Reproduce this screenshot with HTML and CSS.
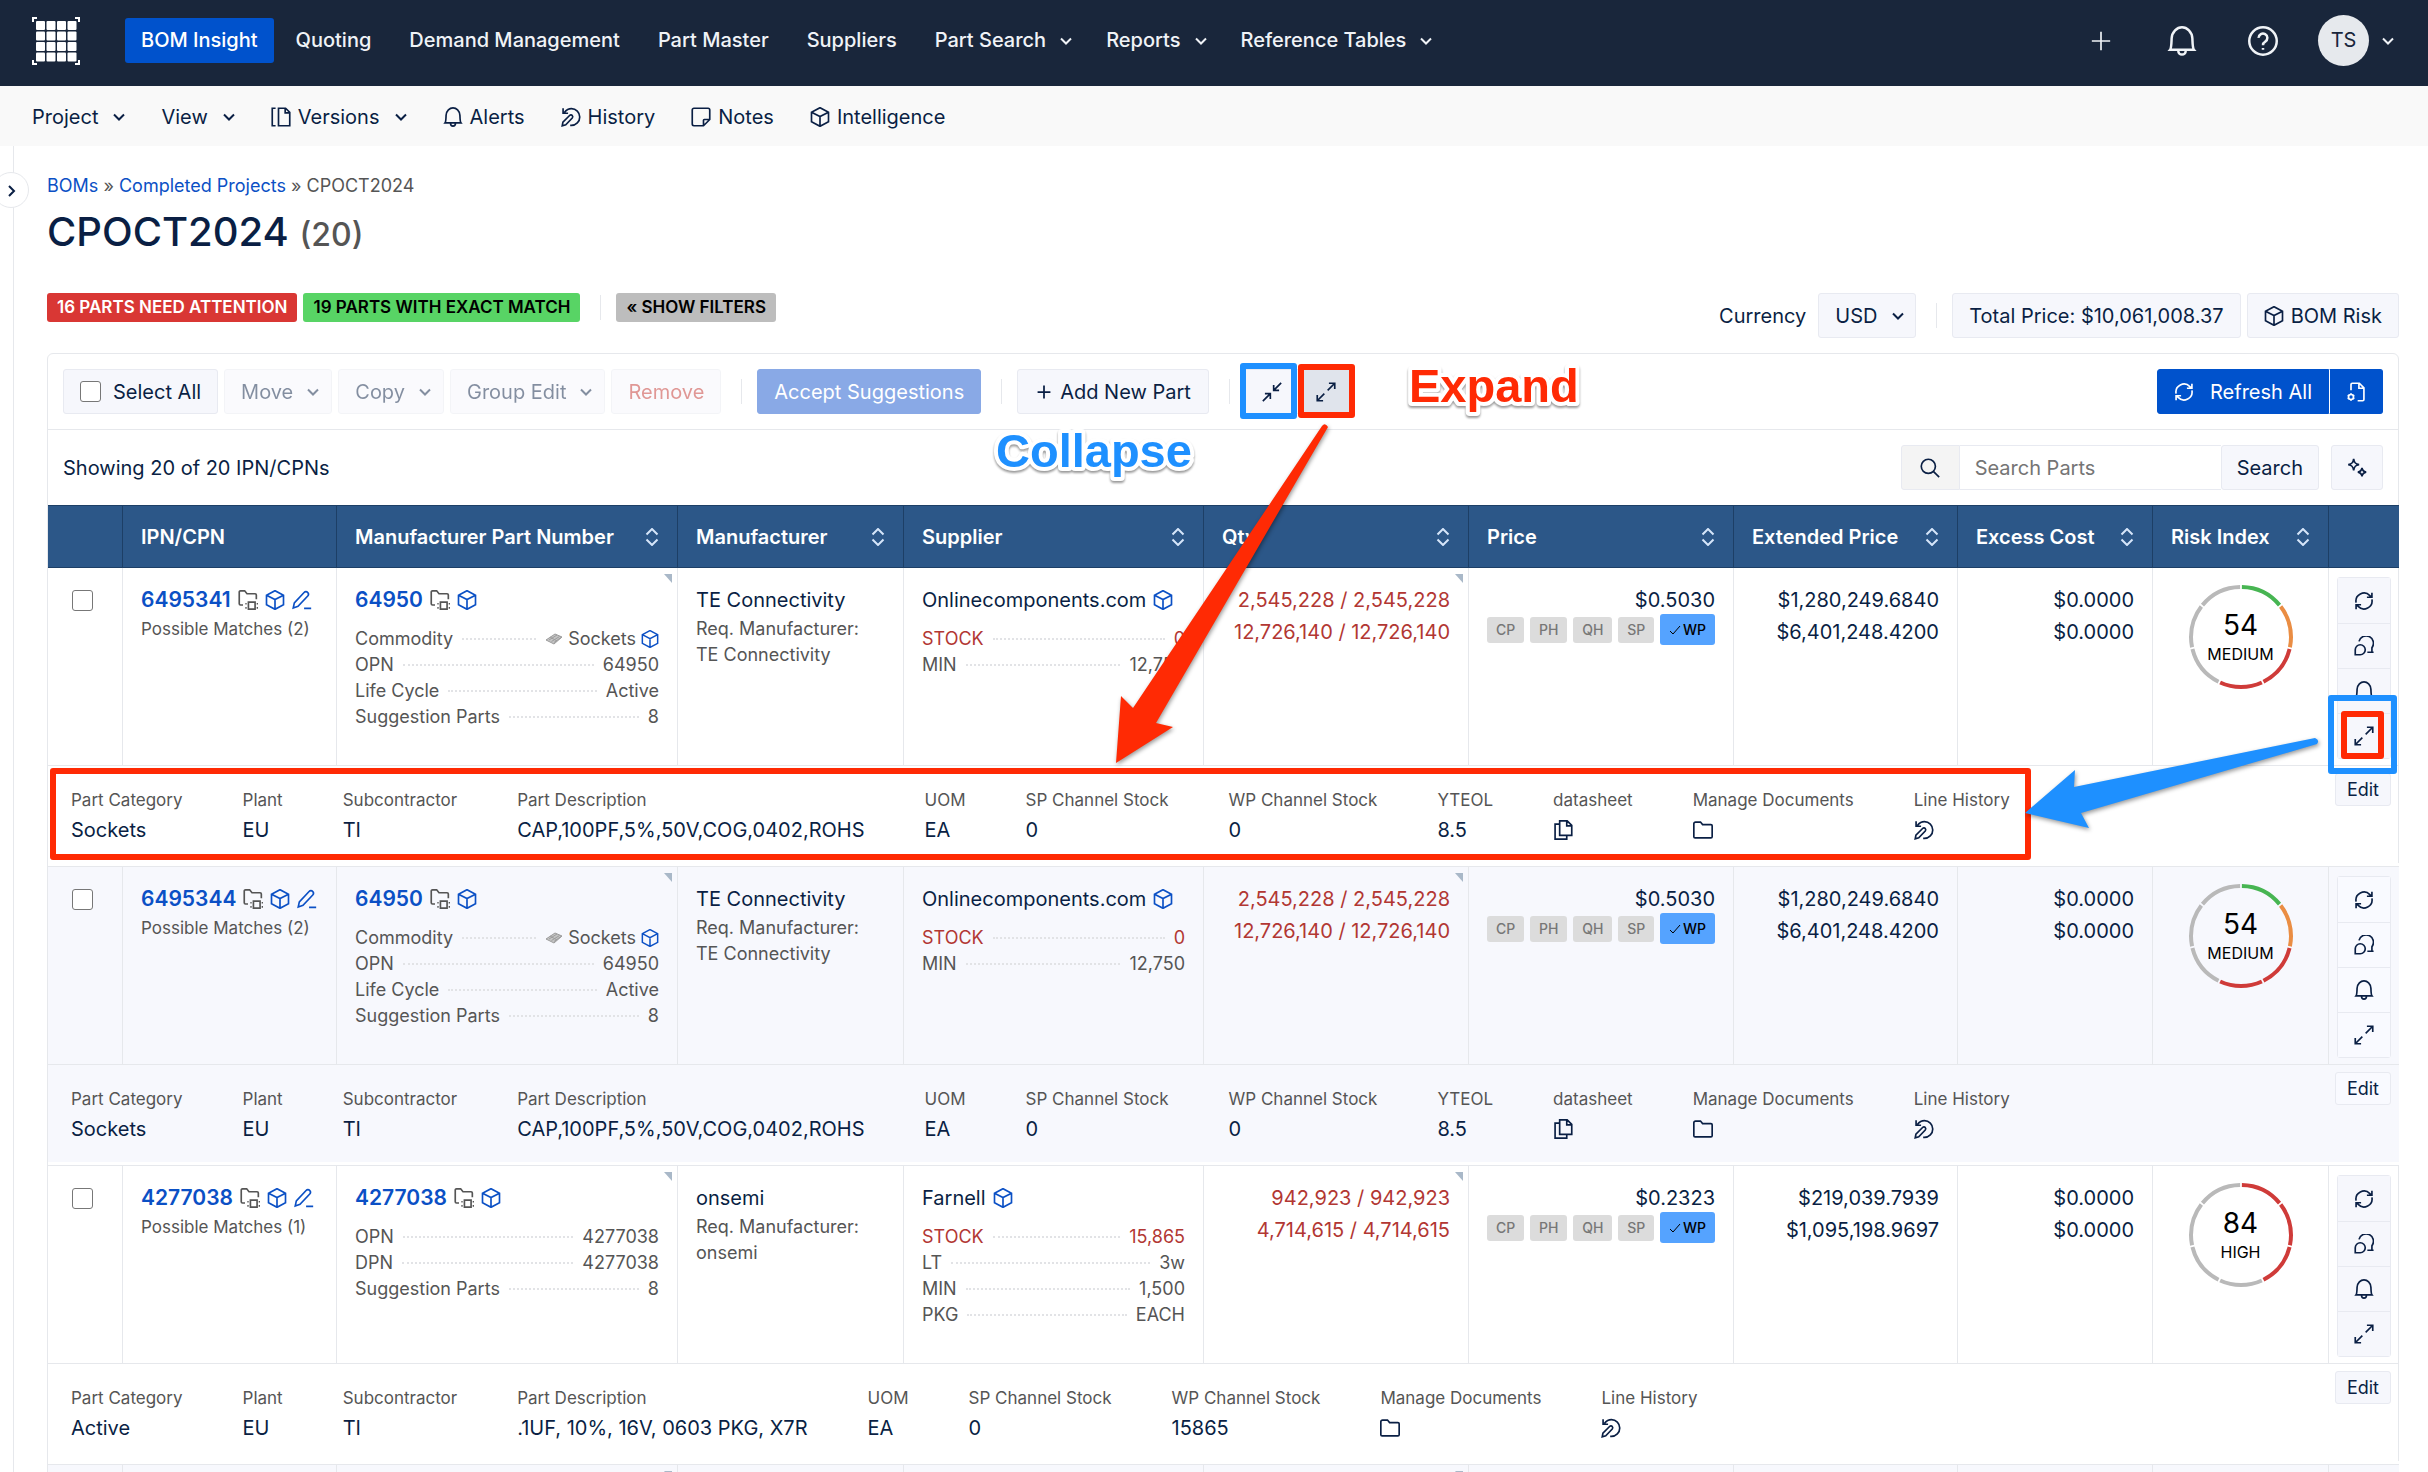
FILE: index.html
```html
<!DOCTYPE html>
<html lang="en">
<head>
    <meta charset="UTF-8">
    <meta name="viewport" content="width=device-width, initial-scale=1.0">
    <title>CPOCT2024 - BOM Insight</title>
    <link rel="stylesheet" href="styles.css">
</head>
<body>

<!-- icon set -->
<svg class="sprite" aria-hidden="true">
    <symbol id="i-down" viewBox="0 0 12 12"><path d="M1 3.5l5 5 5-5"/></symbol>
    <symbol id="i-right" viewBox="0 0 12 12"><path d="M4 1L9 6 4 11"/></symbol>
    <symbol id="i-plus" viewBox="0 0 24 24"><path d="M12 1v22M1 12h22"/></symbol>
    <symbol id="i-bell" viewBox="0 0 24 24"><path d="M2.500 19c1-1.200 1-4 1.200-9C4 4.500 8 1 12 1s8 3.500 8.300 9c.2 5 .2 7.800 1.200 9zM9 19.500c0 4.500 6 4.500 6 0"/></symbol>
    <symbol id="i-help" viewBox="0 0 24 24"><circle cx="12" cy="12" r="11"/><path d="M8.500 9.500a3.500 3.500 0 1 1 5.300 3c-1.300.8-1.800 1.300-1.800 2.800M12 17.600v1.400"/></symbol>
    <symbol id="i-versions" viewBox="0 0 24 24"><path d="M5.500 1.500H1.500v21h4M9 1.500h8.500L22.500 6.500v16H9zM17 1.500V7h5.500"/></symbol>
    <symbol id="i-history" viewBox="0 0 24 24"><path d="M4 6.500C6.500 3.500 9 2 12.500 2a10 10 0 0 1 0 20h-1.500M2.500 1.500v6h6M1.500 22.500l.8-4.300 8-8c1-1 2.400-1 3.200 0s.8 2 0 3l-7.800 8.200z"/></symbol>
    <symbol id="i-note" viewBox="0 0 24 24"><path d="M15 22.500H3.500a2 2 0 0 1-2-2v-17a2 2 0 0 1 2-2h17a2 2 0 0 1 2 2V15zM15 22.500V16a1 1 0 0 1 1-1h6.500"/></symbol>
    <symbol id="i-cube" viewBox="0 0 24 24"><path d="M12 .8l10.200 5.400v11.600L12 23.200 1.800 17.800V6.200zM1.800 6.200L12 11.500l10.200-5.300M12 11.500v11.700"/></symbol>
    <symbol id="i-folder" viewBox="0 0 24 24"><path d="M3 2.500H9L11.500 5.500H21.500A1.500 1.500 0 0 1 23 7v13a1.500 1.500 0 0 1-1.500 1.500h-19A1.500 1.500 0 0 1 1 20V4.500a2 2 0 0 1 2-2z"/></symbol>
    <symbol id="i-part" viewBox="0 0 24 24"><path d="M6 18H3a1.500 1.500 0 0 1-1.500-1.500v-14A1.500 1.500 0 0 1 3 1h5l2.800 3.500H20.500A1.500 1.500 0 0 1 22 6v5M12.500 14.500h8v8.500h-8zM8.800 16.500h1.600M8.800 21.500h1.600M22.400 16.500h1.600M22.400 21.500h1.600"/></symbol>
    <symbol id="i-pencil" viewBox="0 0 24 24"><path d="M1.500 21.500l1.300-6L14.500 3a3 3 0 0 1 4.400 0c1.100 1.200 1.100 2.900 0 4.200L7.200 19.600zM14.500 22h8.500"/></symbol>
    <symbol id="i-refresh" viewBox="0 0 24 24"><path d="M2.500 14A9.700 9.700 0 0 1 19 5.500l2 2M21.500 10A9.700 9.700 0 0 1 5 18.500l-2-2M15.500 7.500H21.500V2M8.500 16.500H2.500V22"/></symbol>
    <symbol id="i-comments" viewBox="0 0 24 24"><path d="M1.500 22.500v-6a6 6 0 1 1 6 6zM6 6.500A8.800 8.800 0 1 1 21.500 14v5.500H23.500M16 19.500h6"/></symbol>
    <symbol id="i-expand" viewBox="0 0 24 24"><path d="M14 10l8.500-8.500M15.500 1.500h7v7M10 14l-8.500 8.500M1.500 15.500v7h7"/></symbol>
    <symbol id="i-collapse" viewBox="0 0 24 24"><path d="M14 10l9-9M14 3.500V10h6.500M10 14l-9 9M3.500 14H10v6.500"/></symbol>
    <symbol id="i-docs" viewBox="0 0 24 24"><path d="M8 1h9l5.500 5.500v12H8zM16.500 1V7h6M8 5H2.500v18h14v-4.500"/></symbol>
    <symbol id="i-search" viewBox="0 0 24 24"><circle cx="10" cy="10" r="8.500"/><path d="M16 16l7 7"/></symbol>
    <symbol id="i-sparkle" viewBox="0 0 24 24"><path d="M8 1c.7 4.800 2.200 6.300 6.500 7-4.300.7-5.800 2.200-6.500 7-.7-4.800-2.200-6.300-6.500-7C5.800 7.300 7.300 5.800 8 1zM18 12c.5 3.200 1.600 4.400 5 5-3.400.6-4.500 1.800-5 5-.5-3.200-1.600-4.400-5-5 3.400-.6 4.500-1.800 5-5z"/></symbol>
    <symbol id="i-filecog" viewBox="0 0 24 24"><path d="M6 10V3a1.500 1.500 0 0 1 1.500-1.500H16L21.500 7v14a1.500 1.500 0 0 1-1.500 1.500h-6M15.500 1.500V7.500h6"/><circle cx="6" cy="18" r="3"/><path d="M6 13.500v1.500M6 21v1.500M2 15.800l1.500.8M8.500 19.400l1.500.8M2 20.200l1.500-.8M8.500 16.600l1.500-.8"/></symbol>
    <symbol id="i-check" viewBox="0 0 12 12"><path d="M1 7l3 3 7-8"/></symbol>
    <symbol id="i-sort" viewBox="0 0 14 18"><path d="M1.500 6.500L7 1l5.500 5.500M1.500 11.500L7 17l5.500-5.500"/></symbol>
    <symbol id="i-chip" viewBox="0 0 18 14"><path d="M1 8L10 2l7 3-8 7z" fill="#c4c4c4" stroke="#9c9c9c" stroke-width="1"/><path d="M4 8l8-5M6.500 9.500l8-5M9 10.500l7-5M5 5l7 4" stroke="#9c9c9c" stroke-width="1"/></symbol>
</svg>

<header class="topbar">
    <a href="#" class="logo" aria-label="Home">
        <svg viewBox="0 0 48 48"><path fill="none" stroke="#fff" stroke-width="2" d="M1 5V1h4M43 1h4v4M1 43v4h4M43 47h4v-4"/><g fill="#fff" id="logo-grid"></g></svg>
    </a>
    <nav class="main-nav">
        <a href="#" class="active">BOM Insight</a>
        <a href="#">Quoting</a>
        <a href="#">Demand Management</a>
        <a href="#">Part Master</a>
        <a href="#">Suppliers</a>
        <a href="#" class="has-menu">Part Search <svg class="chev"><use href="#i-down"/></svg></a>
        <a href="#" class="has-menu">Reports <svg class="chev"><use href="#i-down"/></svg></a>
        <a href="#" class="has-menu">Reference Tables <svg class="chev"><use href="#i-down"/></svg></a>
    </nav>
    <div class="top-actions">
        <button aria-label="Add"><svg class="ico-plus"><use href="#i-plus"/></svg></button>
        <button aria-label="Notifications"><svg class="ico-top"><use href="#i-bell"/></svg></button>
        <button aria-label="Help"><svg class="ico-top"><use href="#i-help"/></svg></button>
        <button class="user" aria-label="Account"><span class="avatar">TS</span><svg class="chev"><use href="#i-down"/></svg></button>
    </div>
</header>

<nav class="sub-nav">
    <a href="#">Project <svg class="chev"><use href="#i-down"/></svg></a>
    <a href="#">View <svg class="chev"><use href="#i-down"/></svg></a>
    <a href="#"><span><svg class="ico"><use href="#i-versions"/></svg>Versions</span> <svg class="chev"><use href="#i-down"/></svg></a>
    <a href="#"><span><svg class="ico"><use href="#i-bell"/></svg>Alerts</span></a>
    <a href="#"><span><svg class="ico"><use href="#i-history"/></svg>History</span></a>
    <a href="#"><span><svg class="ico"><use href="#i-note"/></svg>Notes</span></a>
    <a href="#"><span><svg class="ico"><use href="#i-cube"/></svg>Intelligence</span></a>
</nav>

<div class="page">
    <aside class="rail">
        <button class="rail-toggle" aria-label="Open sidebar"><svg class="chev"><use href="#i-right"/></svg></button>
    </aside>

    <main>
        <div class="breadcrumb"><a href="#">BOMs</a> » <a href="#">Completed Projects</a> » CPOCT2024</div>
        <h1>CPOCT2024 <small>(20)</small></h1>

        <div class="summary">
            <div class="badges">
                <button class="badge red">16 PARTS NEED ATTENTION</button>
                <button class="badge green">19 PARTS WITH EXACT MATCH</button>
                <i class="divider"></i>
                <button class="badge gray">« SHOW FILTERS</button>
            </div>
            <div class="totals">
                <label for="currency">Currency</label>
                <div class="select-wrap">
                    <select id="currency"><option>USD</option></select>
                    <svg class="chev"><use href="#i-down"/></svg>
                </div>
                <i class="divider"></i>
                <button class="btn">Total Price: $10,061,008.37</button>
                <button class="btn"><svg class="ico"><use href="#i-cube"/></svg>BOM Risk</button>
            </div>
        </div>

        <section class="card">
            <div class="toolbar">
                <label class="btn select-all"><input type="checkbox"> Select All</label>
                <button class="btn" disabled>Move <svg class="chev"><use href="#i-down"/></svg></button>
                <button class="btn" disabled>Copy <svg class="chev"><use href="#i-down"/></svg></button>
                <button class="btn" disabled>Group Edit <svg class="chev"><use href="#i-down"/></svg></button>
                <button class="btn remove" disabled>Remove</button>
                <i class="divider"></i>
                <button class="btn primary" disabled>Accept Suggestions</button>
                <i class="divider"></i>
                <button class="btn add"><svg class="ico-small"><use href="#i-plus"/></svg>Add New Part</button>
                <i class="divider"></i>
                <div class="btn-group">
                    <button class="btn" aria-label="Collapse all"><svg class="ico"><use href="#i-collapse"/></svg></button>
                    <button class="btn on" aria-label="Expand all"><svg class="ico"><use href="#i-expand"/></svg></button>
                </div>
                <div class="btn-group refresh">
                    <button class="btn primary"><svg class="ico"><use href="#i-refresh"/></svg>Refresh All</button>
                    <button class="btn primary" aria-label="Refresh settings"><svg class="ico"><use href="#i-filecog"/></svg></button>
                </div>
            </div>

            <div class="listbar">
                <span>Showing 20 of 20 IPN/CPNs</span>
                <form class="search">
                    <label for="search" aria-label="Search Parts"><svg class="ico"><use href="#i-search"/></svg></label>
                    <input type="text" id="search" placeholder="Search Parts">
                    <button type="button" class="btn">Search</button>
                    <button type="button" class="btn sparkle" aria-label="Smart search"><svg class="ico"><use href="#i-sparkle"/></svg></button>
                </form>
            </div>

            <table>
                <colgroup>
                    <col class="c-check"><col class="c-ipn"><col class="c-mpn"><col class="c-mfr"><col class="c-sup"><col class="c-qty">
                    <col class="c-price"><col class="c-ext"><col class="c-excess"><col class="c-risk"><col class="c-act">
                </colgroup>
                <thead><tr id="head"></tr></thead>
                <tbody id="rows"></tbody>
            </table>
        </section>
    </main>
</div>

<!-- guide marks for expand / collapse -->
<svg class="guide" viewBox="0 0 2428 1472" aria-hidden="true">
    <g fill="none" stroke-width="6" stroke-linejoin="round">
        <rect class="line-blue" x="1243" y="366" width="51" height="50"/>
        <rect class="line-red" x="1301" y="367" width="51" height="48"/>
        <rect class="line-red" x="53" y="771" width="1975" height="86"/>
        <rect class="line-blue" x="2331" y="698" width="63" height="73"/>
        <rect class="line-red" x="2344" y="714" width="37" height="42"/>
    </g>
    <path class="arrow-red" d="M1322 426q3-4 6 1L1156 723l17 4-57 36 5-67 12 12z"/>
    <path class="arrow-blue" d="M2315 738q5 2 2 6L2081 813l8 15-64-15 50-43-1 17z"/>
    <text class="mark-red" x="1409" y="402">Expand</text>
    <text class="mark-blue" x="996" y="467">Collapse</text>
</svg>

<script>
    const columns = ['', 'IPN/CPN', 'Manufacturer Part Number', 'Manufacturer', 'Supplier', 'Qty', 'Price', 'Extended Price', 'Excess Cost', 'Risk Index', ''];

    const parts = [
        {
            ipn: '6495341', matches: 2, mpn: '64950', mfr: 'TE Connectivity', supplier: 'Onlinecomponents.com',
            specs: [['Commodity', 'Sockets'], ['OPN', '64950'], ['Life Cycle', 'Active'], ['Suggestion Parts', '8']],
            stock: [['STOCK', '0'], ['MIN', '12,750']],
            qty: ['2,545,228 / 2,545,228', '12,726,140 / 12,726,140'], price: '$0.5030',
            ext: ['$1,280,249.6840', '$6,401,248.4200'], risk: 54, level: 'MEDIUM', ring: ['green', 'orange', 'red', 'red'],
            details: [['Part Category', 'Sockets'], ['Plant', 'EU'], ['Subcontractor', 'TI'], ['Part Description', 'CAP,100PF,5%,50V,COG,0402,ROHS'], ['UOM', 'EA'], ['SP Channel Stock', '0'], ['WP Channel Stock', '0'], ['YTEOL', '8.5'], ['datasheet', '#docs'], ['Manage Documents', '#folder'], ['Line History', '#history']]
        },
        {
            ipn: '4277038', matches: 1, mpn: '4277038', mfr: 'onsemi', supplier: 'Farnell',
            specs: [['OPN', '4277038'], ['DPN', '4277038'], ['Suggestion Parts', '8']],
            stock: [['STOCK', '15,865'], ['LT', '3w'], ['MIN', '1,500'], ['PKG', 'EACH']],
            qty: ['942,923 / 942,923', '4,714,615 / 4,714,615'], price: '$0.2323',
            ext: ['$219,039.7939', '$1,095,198.9697'], risk: 84, level: 'HIGH', ring: ['red', 'red', 'red'],
            details: [['Part Category', 'Active'], ['Plant', 'EU'], ['Subcontractor', 'TI'], ['Part Description', '.1UF, 10%, 16V, 0603 PKG, X7R'], ['UOM', 'EA'], ['SP Channel Stock', '0'], ['WP Channel Stock', '15865'], ['Manage Documents', '#folder'], ['Line History', '#history']]
        }
    ];
    parts.splice(1, 0, { ...parts[0], ipn: '6495344' });

    const ringColors = { green: '#47b552', orange: '#ea8d43', red: '#cf3b39', gray: '#b9b9b9' };

    function icon(name, cls = 'ico') {
        return `<svg class="${cls}"><use href="#i-${name}"/></svg>`;
    }

    function specList(list) {
        return '<dl>' + list.map(([name, value]) => {
            const extra = name === 'Commodity';
            return `<div class="${name === 'STOCK' ? 'alert' : ''}"><dt>${name}</dt><i></i><dd>${extra ? icon('chip', 'chip') : ''}${value}${extra ? icon('cube', 'ico-cube') : ''}</dd></div>`;
        }).join('') + '</dl>';
    }

    // seven segments, filled clockwise from the top
    function gauge(part) {
        let segments = '';
        for (let i = 0; i < 7; i++) {
            const color = ringColors[part.ring[i] || 'gray'];
            segments += `<circle cx="53" cy="53" r="50" pathLength="70" stroke="${color}" stroke-dasharray="9.6 60.4" stroke-dashoffset="${-(i * 10 + 0.2)}"/>`;
        }
        return `<div class="gauge"><svg viewBox="0 0 106 106">${segments}</svg><b>${part.risk}</b><span>${part.level}</span></div>`;
    }

    function partRow(p) {
        const tags = ['CP', 'PH', 'QH', 'SP'].map(t => `<button class="tag">${t}</button>`).join('');
        const cells = p.details.map(([name, value]) =>
            `<div><span>${name}</span>${value[0] === '#' ? `<a href="#" aria-label="${name}">${icon(value.slice(1))}</a>` : `<p>${value}</p>`}</div>`).join('');
        return `
        <tr class="part">
            <td class="check"><input type="checkbox" aria-label="Select ${p.ipn}"></td>
            <td><p class="name"><a href="#">${p.ipn}</a>${icon('part', 'ico gray')}${icon('cube', 'ico blue')}${icon('pencil', 'ico blue')}</p><p class="matches">Possible Matches (${p.matches})</p></td>
            <td class="corner"><p class="name"><a href="#">${p.mpn}</a>${icon('part', 'ico gray')}${icon('cube', 'ico blue')}</p>${specList(p.specs)}</td>
            <td><p>${p.mfr}</p><p class="req">Req. Manufacturer:<br>${p.mfr}</p></td>
            <td><p class="name">${p.supplier}${icon('cube', 'ico blue')}</p>${specList(p.stock)}</td>
            <td class="num alert corner"><p>${p.qty[0]}</p><p>${p.qty[1]}</p></td>
            <td class="num"><p>${p.price}</p><div class="tags">${tags}<button class="tag on">${icon('check', 'ico-check')}WP</button></div></td>
            <td class="num"><p>${p.ext[0]}</p><p>${p.ext[1]}</p></td>
            <td class="num"><p>$0.0000</p><p>$0.0000</p></td>
            <td>${gauge(p)}</td>
            <td class="actions"><div>${['refresh', 'comments', 'bell', 'expand'].map(n => `<button aria-label="${n}">${icon(n)}</button>`).join('')}</div></td>
        </tr>
        <tr class="detail"><td colspan="11"><div class="detail-grid">${cells}<button class="edit">Edit</button></div></td></tr>`;
    }

    document.getElementById('head').innerHTML = columns.map((c, i) =>
        `<th><div>${c}${i > 1 && c ? icon('sort', 'sort') : ''}</div></th>`).join('');

    const nextRow = '<tr class="part">' + columns.map((c, i) => `<td class="${i === 2 || i === 5 ? 'corner' : ''}"></td>`).join('') + '</tr>';
    document.getElementById('rows').innerHTML = parts.map(partRow).join('') + nextRow;

    let grid = '';
    for (let r = 0; r < 4; r++) {
        for (let c = 0; c < 4; c++) {
            grid += `<rect x="${4 + c * 10.5}" y="${4 + r * 10.5}" width="9" height="9" rx="1"/>`;
        }
    }
    document.getElementById('logo-grid').innerHTML = grid;
</script>

</body>
</html>
```
FILE: styles.css
```css
* {
    box-sizing: border-box;
}
body {
    margin: 0;
    height: 100vh;
    overflow: hidden;
    position: relative;
    display: flex;
    flex-direction: column;
    background: #fff;
    color: #0a1f44;
    font-family: Inter, "Liberation Sans", sans-serif;
    font-size: 20px;
    line-height: 32px;
}
a {
    color: #0b50c5;
    text-decoration: none;
}
p, dl, dd {
    margin: 0;
}
button, input, select {
    font: inherit;
    color: inherit;
}
button {
    cursor: pointer;
}
svg {
    fill: none;
    stroke: currentColor;
    stroke-width: 2;
    flex: none;
}
.sprite {
    display: none;
}
.ico {
    width: 20px;
    height: 20px;
}
.ico-small {
    width: 14px;
    height: 14px;
    stroke-width: 3;
}
.chev {
    width: 12px;
    height: 12px;
}
.blue {
    color: #0b50c5;
}
.gray {
    color: #555;
}

/* top bar */
.topbar {
    height: 86px;
    flex: none;
    display: flex;
    align-items: center;
    padding: 0 34px 5px 32px;
    background: #19263b;
    color: #f0f3f7;
}
.logo {
    width: 48px;
    height: 48px;
    margin-right: 45px;
}
.logo svg {
    width: 48px;
    height: 48px;
    stroke: none;
}
.main-nav {
    display: flex;
    gap: 6px;
    font-weight: 500;
}
.main-nav a {
    color: inherit;
    padding: 6px 16px;
    line-height: 33px;
    border-radius: 3px;
}
.main-nav .active {
    background: #0052cc;
    color: #fff;
}
.main-nav .has-menu {
    display: flex;
    align-items: center;
    gap: 14px;
    padding-right: 12px;
}
.top-actions {
    margin-left: auto;
    display: flex;
    align-items: center;
}
.top-actions button {
    width: 81px;
    padding: 0;
    border: 0;
    background: none;
    display: flex;
    align-items: center;
    justify-content: center;
}
.ico-plus {
    width: 20px;
    height: 20px;
}
.ico-top {
    width: 30px;
    height: 30px;
    stroke-width: 2;
}
.top-actions .user {
    width: auto;
    gap: 13px;
    margin-left: 15px;
}
.avatar {
    width: 51px;
    height: 51px;
    border-radius: 50%;
    background: #e6e9ed;
    color: #19263b;
    line-height: 51px;
}

/* sub navigation */
.sub-nav {
    height: 60px;
    flex: none;
    display: flex;
    align-items: center;
    gap: 36px;
    padding: 2px 32px 0;
    background: #f9f9f9;
}
.sub-nav a {
    display: flex;
    align-items: center;
    gap: 15px;
    color: inherit;
}
.sub-nav span {
    display: flex;
    align-items: center;
    gap: 7px;
}

/* page */
.page {
    display: flex;
    flex: 1;
    min-height: 0;
}
.rail {
    width: 14px;
    flex: none;
    border-right: 1px solid #e6e8ec;
    position: relative;
    z-index: 1;
}
.rail-toggle {
    position: absolute;
    top: 26px;
    left: -7px;
    width: 36px;
    height: 36px;
    padding: 0;
    border: 1px solid #e6e8ec;
    border-radius: 50%;
    background: #fff;
}
main {
    flex: 1;
    min-width: 0;
    overflow: hidden;
    padding: 27px 29px 0 33px;
}
.breadcrumb {
    font-size: 18px;
    line-height: 26px;
    color: #555;
}
h1 {
    margin: 4px 0 29px;
    font-size: 40px;
    line-height: 58px;
    font-weight: 500;
}
h1 small {
    font-size: 32px;
    color: #555;
}
.summary {
    display: flex;
    justify-content: space-between;
    align-items: flex-start;
    margin-bottom: 15px;
}
.badges, .totals {
    display: flex;
    align-items: center;
    gap: 6px;
}
.badge {
    border: 0;
    border-radius: 3px;
    padding: 0 10px;
    font-size: 17px;
    font-weight: 600;
    line-height: 29px;
}
.badge.red {
    background: #d93734;
    color: #fff;
}
.badge.green {
    background: #58d465;
    color: #000;
}
.badge.gray {
    background: #bdbdbd;
    color: #000;
}
.divider {
    width: 1px;
    height: 25px;
    margin: 0 9px 0 14px;
    background: #e6e8ec;
}
.btn {
    height: 45px;
    padding: 0 16px;
    border: 1px solid #e8eaf1;
    border-radius: 3px;
    background: #f6f7fc;
    display: flex;
    align-items: center;
    gap: 7px;
    white-space: nowrap;
}
.btn .chev {
    margin: 0 -4px 0 7px;
}
.btn:disabled {
    opacity: 0.5;
}
.btn.primary {
    background: #0052cc;
    border-color: #0052cc;
    color: #fff;
}
.btn.primary:disabled {
    background: #89a9e6;
    border-color: #89a9e6;
    opacity: 1;
}
.btn.remove {
    color: #c2322e;
}
.btn.add {
    padding: 0 17px 0 19px;
    gap: 9px;
}
.btn.on {
    background: #e0e4ec;
}
.totals label {
    margin-right: 6px;
}
.select-wrap {
    position: relative;
}
.select-wrap select {
    appearance: none;
    width: 98px;
    height: 45px;
    padding: 0 16px;
    border: 1px solid #e8eaf1;
    border-radius: 3px;
    background: #f6f7fc;
}
.select-wrap .chev {
    position: absolute;
    right: 12px;
    top: 17px;
    pointer-events: none;
}
input[type="checkbox"] {
    appearance: none;
    width: 21px;
    height: 21px;
    margin: 0;
    border: 1px solid #777;
    border-radius: 3px;
    background: #fff;
    display: block;
}

/* parts card */
.card {
    border: 1px solid #e6e8ec;
    border-radius: 6px 6px 0 0;
}
.toolbar {
    display: flex;
    align-items: center;
    gap: 6px;
    padding: 15px;
    border-bottom: 1px solid #e6e8ec;
}
.btn.select-all {
    gap: 12px;
}
.btn-group {
    display: flex;
}
.btn-group .btn {
    border-radius: 0;
    padding: 0 16px;
}
.refresh {
    margin-left: auto;
}
.refresh .btn {
    gap: 16px;
    border-radius: 3px 0 0 3px;
}
.refresh .btn + .btn {
    border-left-color: #fff;
    border-radius: 0 3px 3px 0;
}
.listbar {
    display: flex;
    justify-content: space-between;
    align-items: center;
    padding: 15px;
}
.search {
    display: flex;
}
.search label {
    width: 59px;
    height: 45px;
    border: 1px solid #e8eaf1;
    border-radius: 3px 0 0 3px;
    background: #f4f4f4;
    display: flex;
    align-items: center;
    justify-content: center;
}
.search input {
    width: 261px;
    height: 45px;
    padding: 0 15px;
    border: 1px solid #e8eaf1;
    border-width: 1px 0;
    outline: 0;
}
.search input::placeholder {
    color: #757575;
    opacity: 1;
}
.search .btn {
    padding: 0 15px;
}
.search .sparkle {
    margin-left: 12px;
}

/* table */
table {
    width: 100%;
    table-layout: fixed;
    border-collapse: separate;
    border-spacing: 0;
}
.c-check { width: 75px; }
.c-ipn { width: 214px; }
.c-mpn { width: 341px; }
.c-mfr { width: 226px; }
.c-sup { width: 300px; }
.c-qty { width: 265px; }
.c-price { width: 265px; }
.c-ext { width: 224px; }
.c-excess { width: 195px; }
.c-risk { width: 176px; }
.c-act { width: 70px; }
th {
    height: 63px;
    padding: 0 18px;
    background: #2c5788;
    color: #fff;
    font-weight: 600;
    text-align: left;
    border: 1px solid #1d3f66;
    border-left-width: 0;
}
th:last-child {
    border-right: 0;
}
th div {
    display: flex;
    justify-content: space-between;
    align-items: center;
    white-space: nowrap;
}
.sort {
    width: 14px;
    height: 18px;
    color: #d6e6fa;
}
td {
    padding: 16px 18px 0;
    vertical-align: top;
    border-right: 1px solid #e6e8ec;
    border-bottom: 1px solid #e6e8ec;
}
td:last-child {
    border-right: 0;
}
.part td {
    height: 198px;
}
.part:nth-child(4n+3), .detail:nth-child(4n) {
    background: #f7f8fd;
}
.part:nth-child(4n+3) .actions button, .detail:nth-child(4n) .edit {
    background: #f9faff;
}
.corner {
    position: relative;
}
.corner::after {
    content: "";
    position: absolute;
    top: 6px;
    right: 5px;
    border-top: 9px solid #a9b8c8;
    border-left: 8px solid transparent;
}
td.check {
    padding: 22px 24px 0;
}
.name {
    display: flex;
    align-items: center;
    gap: 7px;
    white-space: nowrap;
}
.name a {
    font-size: 21px;
    font-weight: 600;
}
.matches, .req, dl {
    font-size: 18px;
    line-height: 26px;
    color: #555;
}
.matches {
    font-size: 17px;
}
dl {
    margin-top: 10px;
}
dl div {
    display: flex;
    align-items: center;
    gap: 9px;
}
dl i {
    flex: 1;
    border-top: 2px dotted #e2e3e6;
}
dd {
    display: flex;
    align-items: center;
    gap: 5px;
}
.chip {
    width: 18px;
    height: 14px;
}
.ico-cube {
    width: 18px;
    height: 18px;
    color: #0b50c5;
}
.alert {
    color: #b23733;
}
.num {
    text-align: right;
    white-space: nowrap;
}
.tags {
    display: flex;
    justify-content: space-between;
    align-items: center;
    margin-top: -2px;
}
.tag {
    padding: 0 9px;
    border: 0;
    border-radius: 3px;
    background: #dcdcdc;
    color: #777;
    font-size: 14px;
    font-weight: 500;
    line-height: 26px;
}
.tag.on {
    display: flex;
    align-items: center;
    gap: 2px;
    background: #55a3ff;
    color: #000;
    line-height: 31px;
}
.ico-check {
    width: 12px;
    height: 12px;
    stroke-width: 1;
}
.gauge {
    position: relative;
    width: 106px;
    height: 106px;
    margin: 0 auto;
    display: flex;
    flex-direction: column;
    align-items: center;
    justify-content: center;
    color: #000;
    font-size: 16px;
    line-height: 24px;
}
.gauge svg {
    position: absolute;
    inset: 0;
    stroke-width: 4;
    transform: rotate(-90deg);
}
.gauge b {
    font-size: 28px;
    font-weight: 400;
    line-height: 34px;
}
td.actions {
    padding: 9px 8px 6px;
}
.actions div {
    border: 1px solid #e8eaf1;
    border-radius: 3px;
}
.actions button {
    display: flex;
    align-items: center;
    justify-content: center;
    width: 100%;
    height: 45px;
    padding: 0;
    border: 0;
    background: #f6f7fc;
}
.actions button + button {
    border-top: 1px solid #e8eaf1;
}
.detail td {
    height: 101px;
    padding: 7px 8px 0 23px;
    box-shadow: inset 0 -3px #fff;
}
.detail-grid {
    display: flex;
    gap: 60px;
    align-items: flex-start;
}
.detail-grid div {
    padding-top: 13px;
}
.detail-grid span {
    display: block;
    font-size: 17px;
    line-height: 28px;
    color: #555;
}
.detail-grid a {
    display: flex;
    align-items: center;
    height: 32px;
    color: inherit;
}
.edit {
    margin-left: auto;
    height: 33px;
    padding: 0 11px;
    border: 1px solid #e8eaf1;
    border-radius: 3px;
    background: #f6f7fc;
    font-size: 18px;
    line-height: 30px;
}

/* guide marks */
.guide {
    position: absolute;
    top: 0;
    left: 0;
    width: 2428px;
    height: 1472px;
    pointer-events: none;
    stroke: none;
}
.line-red {
    stroke: #ff2a04;
}
.line-blue {
    stroke: #1e90ff;
}
.arrow-red, .arrow-blue {
    filter: drop-shadow(1px 2px 2px rgba(0, 0, 0, 0.4));
}
.arrow-red, .mark-red {
    fill: #ff2a04;
}
.arrow-blue, .mark-blue {
    fill: #1e90ff;
}
.guide text {
    font-family: "Liberation Sans", Arial, sans-serif;
    font-size: 47px;
    font-weight: 700;
    stroke: #fff;
    stroke-width: 8;
    stroke-linejoin: round;
    paint-order: stroke;
    filter: drop-shadow(0 2px 1px rgba(0, 0, 0, 0.4));
}
```
